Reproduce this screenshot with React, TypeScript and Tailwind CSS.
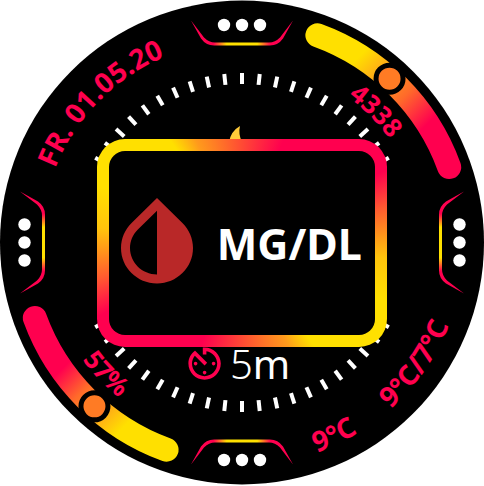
import { MdInvertColors } from "react-icons/md";

const RED = "#ff004f";
const YELLOW = "#ffe000";
const CX = 242;
const CY = 242.5;

function point(radius: number, degrees: number) {
  const a = (degrees * Math.PI) / 180;
  return `${(CX + radius * Math.sin(a)).toFixed(2)} ${(CY - radius * Math.cos(a)).toFixed(2)}`;
}

// Arc between two clock angles (0 = twelve o'clock).
function arc(radius: number, from: number, to: number) {
  return `M${point(radius, from)}A${radius} ${radius} 0 0 ${to > from ? 1 : 0} ${point(radius, to)}`;
}

const tickAngles = Array.from({ length: 60 }, (_, i) => i * 6).filter((a) => {
  const fromVertical = Math.min(a % 180, 180 - (a % 180));
  return fromVertical <= 60;
});

type CurvedTextProps = {
  id: string;
  radius: number;
  from: number;
  to: number;
  className: string;
  children: string;
};

function CurvedText({ id, radius, from, to, className, children }: CurvedTextProps) {
  return (
    <>
      <path id={id} d={arc(radius, from, to)} fill="none" />
      <text className={className} fill={RED} textAnchor="middle">
        <textPath href={`#${id}`} startOffset="50%">
          {children}
        </textPath>
      </text>
    </>
  );
}

function MenuHandle({ angle }: { angle: number }) {
  return (
    <g transform={`translate(${CX} ${CY}) rotate(${angle})`}>
      <path
        fill="url(#handle)"
        d="M-51 -222L-38 -205Q-33 -200 -27 -200H27Q33 -200 38 -205L51 -222L41 -204Q36 -197 28 -197H-28Q-36 -197 -41 -204Z"
      />
      {[-18, 0, 18].map((x) => (
        <circle key={x} cx={x} cy={-217.5} r="6.2" fill="#fff" />
      ))}
    </g>
  );
}

function Gauge({ start, knob, gradient }: { start: number; knob: number; gradient: string }) {
  const [x, y] = point(220.5, knob).split(" ");
  return (
    <>
      <path
        d={arc(220.5, start, start + 50)}
        fill="none"
        stroke={`url(#${gradient})`}
        strokeWidth="24"
        strokeLinecap="round"
      />
      <circle cx={x} cy={y} r="13.5" fill="#ff7b24" stroke="#000" strokeWidth="5" />
    </>
  );
}

function Dial() {
  return (
    <svg viewBox="0 0 484 486" className="col-start-1 row-start-1 block w-full font-['Noto_Sans',sans-serif]">
      <defs>
        <linearGradient id="steps" gradientUnits="userSpaceOnUse" x1="317" y1="35" x2="450" y2="168">
          <stop offset="0.24" stopColor={YELLOW} />
          <stop offset="0.4" stopColor="#ffa01c" />
          <stop offset="0.56" stopColor="#ff6a2a" />
          <stop offset="0.75" stopColor={RED} />
        </linearGradient>
        <linearGradient id="battery" gradientUnits="userSpaceOnUse" x1="34" y1="317" x2="167" y2="450">
          <stop offset="0.3" stopColor={RED} />
          <stop offset="0.46" stopColor="#ff6a2a" />
          <stop offset="0.6" stopColor="#ffa01c" />
          <stop offset="0.75" stopColor={YELLOW} />
        </linearGradient>
        <linearGradient id="handle" gradientUnits="userSpaceOnUse" x1="-51" y1="0" x2="51" y2="0">
          <stop offset="0.22" stopColor={RED} />
          <stop offset="0.35" stopColor={YELLOW} />
          <stop offset="0.65" stopColor={YELLOW} />
          <stop offset="0.78" stopColor={RED} />
        </linearGradient>
      </defs>

      <circle cx={CX} cy={CY} r="242" fill="#000" />

      {tickAngles.map((a) => (
        <rect key={a} x="240" y="73" width="4" height="11" fill="#fff" transform={`rotate(${a} ${CX} ${CY})`} />
      ))}

      <path d="M240 126Q231 131 229 142H242Q238 134 240 126Z" fill="#ffcb3a" />

      {[0, 90, 180, 270].map((a) => (
        <MenuHandle key={a} angle={a} />
      ))}

      <Gauge start={20} knob={42} gradient="steps" />
      <Gauge start={200} knob={222} gradient="battery" />

      <CurvedText id="date" radius={201} from={-85} to={-6} className="text-[28px] font-bold">
        FR. 01.05.20
      </CurvedText>
      <CurvedText id="step-count" radius={180} from={15} to={76} className="text-[26px] font-bold">
        4338
      </CurvedText>
      <CurvedText id="charge" radius={198} from={256} to={196} className="text-[26px] font-bold">
        57%
      </CurvedText>
      <CurvedText id="now" radius={223} from={175} to={134} className="text-[28px] font-bold">
        9°C
      </CurvedText>
      <CurvedText id="range" radius={223} from={160} to={90} className="text-[28px] font-bold">
        9°C/7°C
      </CurvedText>

      <g fill={RED} transform="translate(183 342) scale(1.8)">
        <path d="M11 17c0 .55.45 1 1 1s1-.45 1-1-.45-1-1-1-1 .45-1 1zm0-14v4h2V5.08c3.39.49 6 3.39 6 6.92 0 3.87-3.13 7-7 7s-7-3.13-7-7c0-1.68.59-3.22 1.58-4.42L12 13l1.41-1.41-6.8-6.8v.02C4.42 6.45 3 9.05 3 12c0 4.97 4.02 9 9 9 4.97 0 9-4.03 9-9s-4.03-9-9-9h-1zm7 9c0-.55-.45-1-1-1s-1 .45-1 1 .45 1 1 1 1-.45 1-1zM6 12c0 .55.45 1 1 1s1-.45 1-1-.45-1-1-1-1 .45-1 1z" />
      </g>
      <text x="230" y="379" fill="#fff" className="text-[40px] font-light">
        5<tspan className="font-normal">m</tspan>
      </text>
    </svg>
  );
}

export default function App() {
  return (
    <main className="grid w-full bg-white">
      <Dial />
      <section className="z-10 col-start-1 row-start-1 w-3/5 place-self-center rounded-[28px] bg-[conic-gradient(#ff4a34_0deg,#ff004f_22deg,#ff004f_63deg,#ff5a30_76deg,#ff9c18_88deg,#ffc40c_96deg,#ffe000_112deg,#ffe000_145deg,#ff9a1c_156deg,#ff4a34_180deg,#ff004f_202deg,#ff004f_243deg,#ff5a30_256deg,#ff9c18_268deg,#ffc40c_276deg,#ffe000_292deg,#ffe000_325deg,#ff9a1c_336deg,#ff4a34_360deg)] p-3">
        <div className="flex h-46 items-center gap-1.5 rounded-2xl bg-black">
          <MdInvertColors className="-ml-1.5 size-[108px] shrink-0 text-[#b92828]" />
          <h1 className="font-['Noto_Sans',sans-serif] text-[43px] leading-none font-bold text-white">MG/DL</h1>
        </div>
      </section>
    </main>
  );
}
